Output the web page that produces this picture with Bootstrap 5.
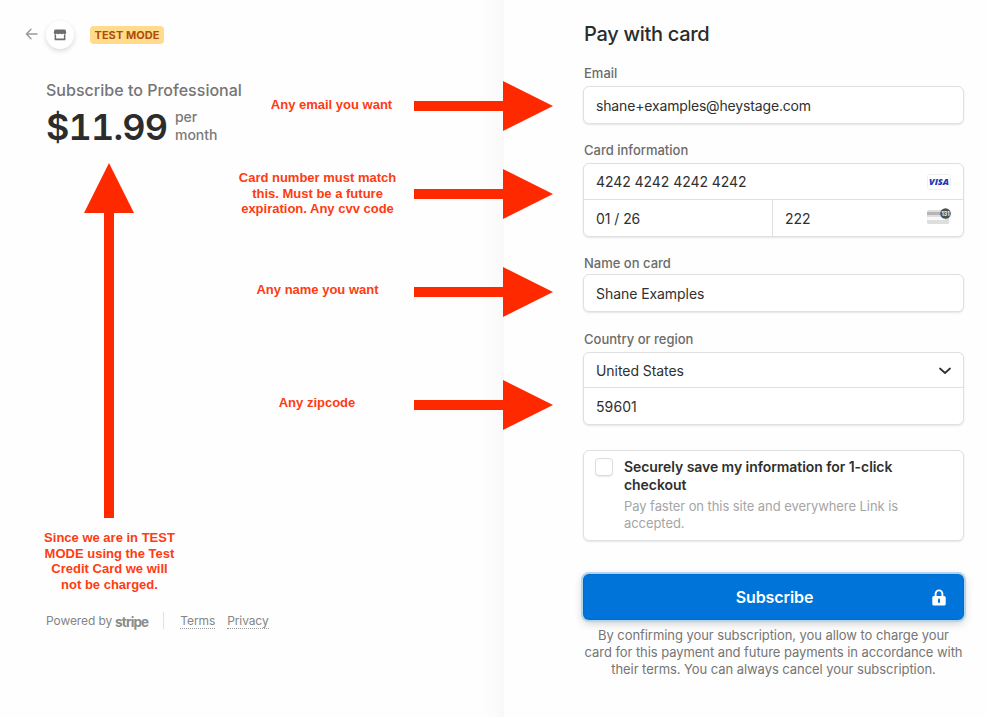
<!DOCTYPE html>
<html lang="en">
<head>
<meta charset="utf-8">
<meta name="viewport" content="width=device-width, initial-scale=1">
<title>Subscribe to Professional</title>
<link href="https://cdn.jsdelivr.net/npm/bootstrap@5.3.0/dist/css/bootstrap.min.css" rel="stylesheet">
<style>
body{font-family:Inter,"Liberation Sans",sans-serif;background:#fefefe;color:#303030;height:717px;overflow:hidden}
.page{height:717px}
.summary{width:504px;padding:21px 0 0 25px;background:linear-gradient(90deg,#fefefe 95%,#fafafa 99%,#f8f8f8)}
.checkout{width:381px;margin-left:79px;padding-top:20px}
.back{margin-bottom:2px}
.shop{width:28px;height:28px;margin-left:7px;background:#fff;box-shadow:0 2px 5px rgba(0,0,0,.15)}
.mode{margin:0 0 1px 16px;width:74px;height:18px;border-radius:4px;background:#ffdb8b;color:#ae4d06;font-size:11px;font-weight:700;line-height:18px;letter-spacing:.05px;text-align:center;white-space:nowrap}
.plan{margin:31px 0 0 21px;font-size:16px;line-height:20px;font-weight:500;letter-spacing:.02px;color:#757575;white-space:nowrap}
.price{margin:6px 0 0 21px}
.amount{font-size:36px;line-height:42px;font-weight:600;font-feature-settings:"tnum";letter-spacing:-.85px;width:121px;color:#2c2c2c}
.period{font-size:14px;line-height:18px;font-weight:500;letter-spacing:-.05px;color:#7a7a7a;margin:-1px 0 1px 8px}
.foot{margin:464px 0 0 21px;height:18px;font-size:12px;line-height:18px;letter-spacing:-.1px;color:#858585;white-space:nowrap}
.foot b{font-size:13.5px;letter-spacing:-.85px;color:#8c8c8c;margin-left:3px;padding-top:1px}
.foot i{width:1px;height:17px;background:#e2e2e2;margin:0 16px 2px 15px}
.foot a{color:#858585;text-decoration:none;border-bottom:1px dotted #999;line-height:15px;margin-right:12px}
h1{font-size:20px;line-height:28px;font-weight:500;letter-spacing:-.3px;margin:0;color:#2b2b2b;padding-left:1px}
.tag{display:block;font-size:13px;line-height:16px;font-weight:500;color:#6b6b6b;padding-left:1px}
.t1{margin:17px 0 5px}.t2{margin:18px 0 5px}.t3{margin:18px 0 3px}.t4{margin:19px 0 5px}
.box{border:1px solid #e0e0e0;border-radius:6px;background:#fff;box-shadow:0 1px 2px rgba(0,0,0,.1)}
.box .form-control{border:0;background:transparent;font-size:14px;line-height:20px;letter-spacing:-.06px;color:#303030;padding:0 12px;height:36px;border-radius:0}
.box .form-control.mail{letter-spacing:-.16px}
.b1{height:38px}
.b2{height:74px}
.b2>.top-row{height:35px}
.split{border-top:1px solid #e0e0e0;height:37px}
.b3{height:73px}
.b3>.top-row{height:34px}
.b3 .split .form-control{letter-spacing:.1px}
.exp{width:189px;flex:none;border-right:1px solid #e0e0e0}
.tick{width:18px;height:18px;flex:none;border:1px solid #dcdcdc;border-radius:4px;background:#fff;box-shadow:0 1px 1px rgba(0,0,0,.08)}
.save{height:91px;padding:7px 11px;margin-top:25px}
.copy{margin-left:11px;white-space:nowrap}
.save strong{display:block;font-size:14px;line-height:18px;font-weight:600;letter-spacing:-.06px;color:#303030}
.save span{display:block;font-size:13px;line-height:17px;letter-spacing:-.07px;color:#a5a5a5;margin-top:4px}
.btn-pay{height:46px;margin-top:33px;border:1px dotted #1c5f96;border-radius:6px;background:#0074d9;color:#fff;font-size:16px;font-weight:600;letter-spacing:-.1px;box-shadow:0 0 0 2px #b0d5ed,0 3px 10px rgba(0,0,0,.22);padding:0 17px}
.btn-pay:hover{background:#0074d9;color:#fff}
.terms{font-size:13px;line-height:17px;letter-spacing:-.065px;color:#757575;text-align:center;margin:7px -5px 0;white-space:nowrap}
.notes{left:0;top:0;width:988px;height:717px;pointer-events:none}
.note{position:absolute;color:#ff3b12;font:bold 13px/15.7px "Liberation Sans",Arial,sans-serif;text-align:center;white-space:nowrap;transform:translateX(-50%)}
.n1{left:331.5px;top:97px}.n2{left:317.5px;top:170px}.n3{left:317.5px;top:282px}.n4{left:317px;top:395px}.n5{left:109.500px;top:530px}
</style>
<script src="https://cdn.jsdelivr.net/npm/bootstrap@5.3.0/dist/js/bootstrap.bundle.min.js"></script>
</head>
<body>
<div class="page d-flex position-relative">
  <section class="summary flex-shrink-0">
    <div class="d-flex align-items-center">
      <svg class="back" width="14" height="14" viewBox="0 0 14 14" fill="none" stroke="#9a9a9a" stroke-width="1.4" stroke-linecap="round" stroke-linejoin="round"><path d="M12 7H1.5M6 2.3 1.4 7 6 11.7"/></svg>
      <div class="shop rounded-circle d-flex align-items-center justify-content-center">
        <svg width="14" height="14" viewBox="0 0 14 14" fill="#6d6d6d"><path d="M2.2 1.5h9.6q.6 0 .8.6l.6 2.3c0 1-.6 1.8-1.6 1.8-.8 0-1.2-.3-1.5-.8-.3.5-.8.8-1.5.8S7.4 5.9 7 5.400c-.4.5-.9.8-1.600.8s-1.200-.3-1.500-.8c-.3.5-.7.8-1.500.8C1.400 6.200.8 5.400.8 4.400l.6-2.300q.2-.6.8-.6z"/><path d="M1.600 6.500h1.500v4h7.800v-4h1.500v5.700H1.600z"/></svg>
      </div>
      <div class="mode">TEST MODE</div>
    </div>
    <div class="plan">Subscribe to Professional</div>
    <div class="price d-flex align-items-center">
      <div class="amount">$11.99</div>
      <div class="period">per<br>month</div>
    </div>
    <footer class="foot d-flex align-items-center"><span>Powered by</span><b>stripe</b><i></i><a>Terms</a><a>Privacy</a></footer>
  </section>

  <main class="checkout flex-shrink-0">
    <h1>Pay with card</h1>
    <label class="tag t1" for="email">Email</label>
    <div class="box b1"><input id="email" class="form-control shadow-none mail" value="shane+examples@heystage.com"></div>

    <label class="tag t2" for="card">Card information</label>
    <div class="box b2">
      <div class="top-row d-flex align-items-center pe-2">
        <input id="card" class="form-control shadow-none" value="4242 4242 4242 4242">
        <svg class="flex-shrink-0 me-1" width="26" height="18" viewBox="0 0 26 18"><rect x="2.500" y="1.500" width="23" height="15" rx="2" fill="#fff" stroke="#f0f0f0"/><text x="14" y="12" text-anchor="middle" textLength="20" lengthAdjust="spacingAndGlyphs" font-family="Open Sans,sans-serif" font-size="9.500" font-weight="800" font-style="italic" fill="#1d37b8">VISA</text></svg>
      </div>
      <div class="split d-flex">
        <div class="exp"><input class="form-control shadow-none" value="01 / 26" aria-label="Expiration"></div>
        <div class="cvc d-flex align-items-center flex-fill pe-2">
          <input class="form-control shadow-none" value="222" aria-label="CVC">
          <svg class="flex-shrink-0 me-1" width="26" height="20" viewBox="0 0 26 20"><g transform="translate(1 -2)"><rect x="1" y="4" width="22" height="14" rx="1.500" fill="#dedede"/><path d="M1 6h22v3H1z" fill="#b5b5b5"/><path d="M1 11h18v3H1z" fill="#f8f8f8"/><circle cx="19.500" cy="7.500" r="5.300" fill="#505050"/><text x="19.500" y="10" text-anchor="middle" textLength="8" lengthAdjust="spacingAndGlyphs" font-family="Inter,sans-serif" font-size="6.500" font-weight="700" fill="#fff">131</text></g></svg>
        </div>
      </div>
    </div>

    <label class="tag t3" for="name">Name on card</label>
    <div class="box b1"><input id="name" class="form-control shadow-none" value="Shane Examples"></div>

    <label class="tag t4" for="country">Country or region</label>
    <div class="box b3">
      <div class="top-row d-flex align-items-center pe-2">
        <input id="country" class="form-control shadow-none" value="United States">
        <svg class="flex-shrink-0 me-1" width="13" height="9" viewBox="0 0 13 9" fill="none" stroke="#303030" stroke-width="1.700" stroke-linecap="round" stroke-linejoin="round"><path d="M2 2.500l5 4.500 5-4.500"/></svg>
      </div>
      <div class="split"><input class="form-control shadow-none" value="59601" aria-label="ZIP"></div>
    </div>

    <div class="box save d-flex">
      <div class="tick"></div>
      <div class="copy"><strong>Securely save my information for 1-click<br>checkout</strong><span>Pay faster on this site and everywhere Link is<br>accepted.</span></div>
    </div>

    <button class="btn btn-pay w-100 d-flex align-items-center" type="button">
      <span class="flex-fill ps-3">Subscribe</span>
      <svg width="14" height="17" viewBox="0 0 14 17"><path d="M3.600 8V4.800a3.400 3.400 0 0 1 6.800 0V8" fill="none" stroke="#fff" stroke-width="1.900"/><rect x=".3" y="7" width="13.400" height="9.500" rx="1.500" fill="#fff"/><path d="M7 10.500v2.500" stroke="#0074d9" stroke-width="2" stroke-linecap="round"/></svg>
    </button>
    <p class="terms">By confirming your subscription, you allow to charge your<br>card for this payment and future payments in accordance with<br>their terms. You can always cancel your subscription.</p>
  </main>

  <div class="notes position-absolute">
    <svg width="988" height="717" fill="#ff2900"><defs><path id="arrow" d="M0-5H89V-25L139 0 89 25V5H0z"/></defs>
      <use href="#arrow" x="414" y="106"/><use href="#arrow" x="414" y="194"/><use href="#arrow" x="414" y="292"/><use href="#arrow" x="414" y="405"/>
      <path d="M104 518V213H84L109 163 134 213H114V518z"/></svg>
    <div class="note n1">Any email you want</div>
    <div class="note n2">Card number must match<br>this. Must be a future<br>expiration. Any cvv code</div>
    <div class="note n3">Any name you want</div>
    <div class="note n4">Any zipcode</div>
    <div class="note n5">Since we are in TEST<br>MODE using the Test<br>Credit Card we will<br>not be charged.</div>
  </div>
</div>
</body>
</html>
